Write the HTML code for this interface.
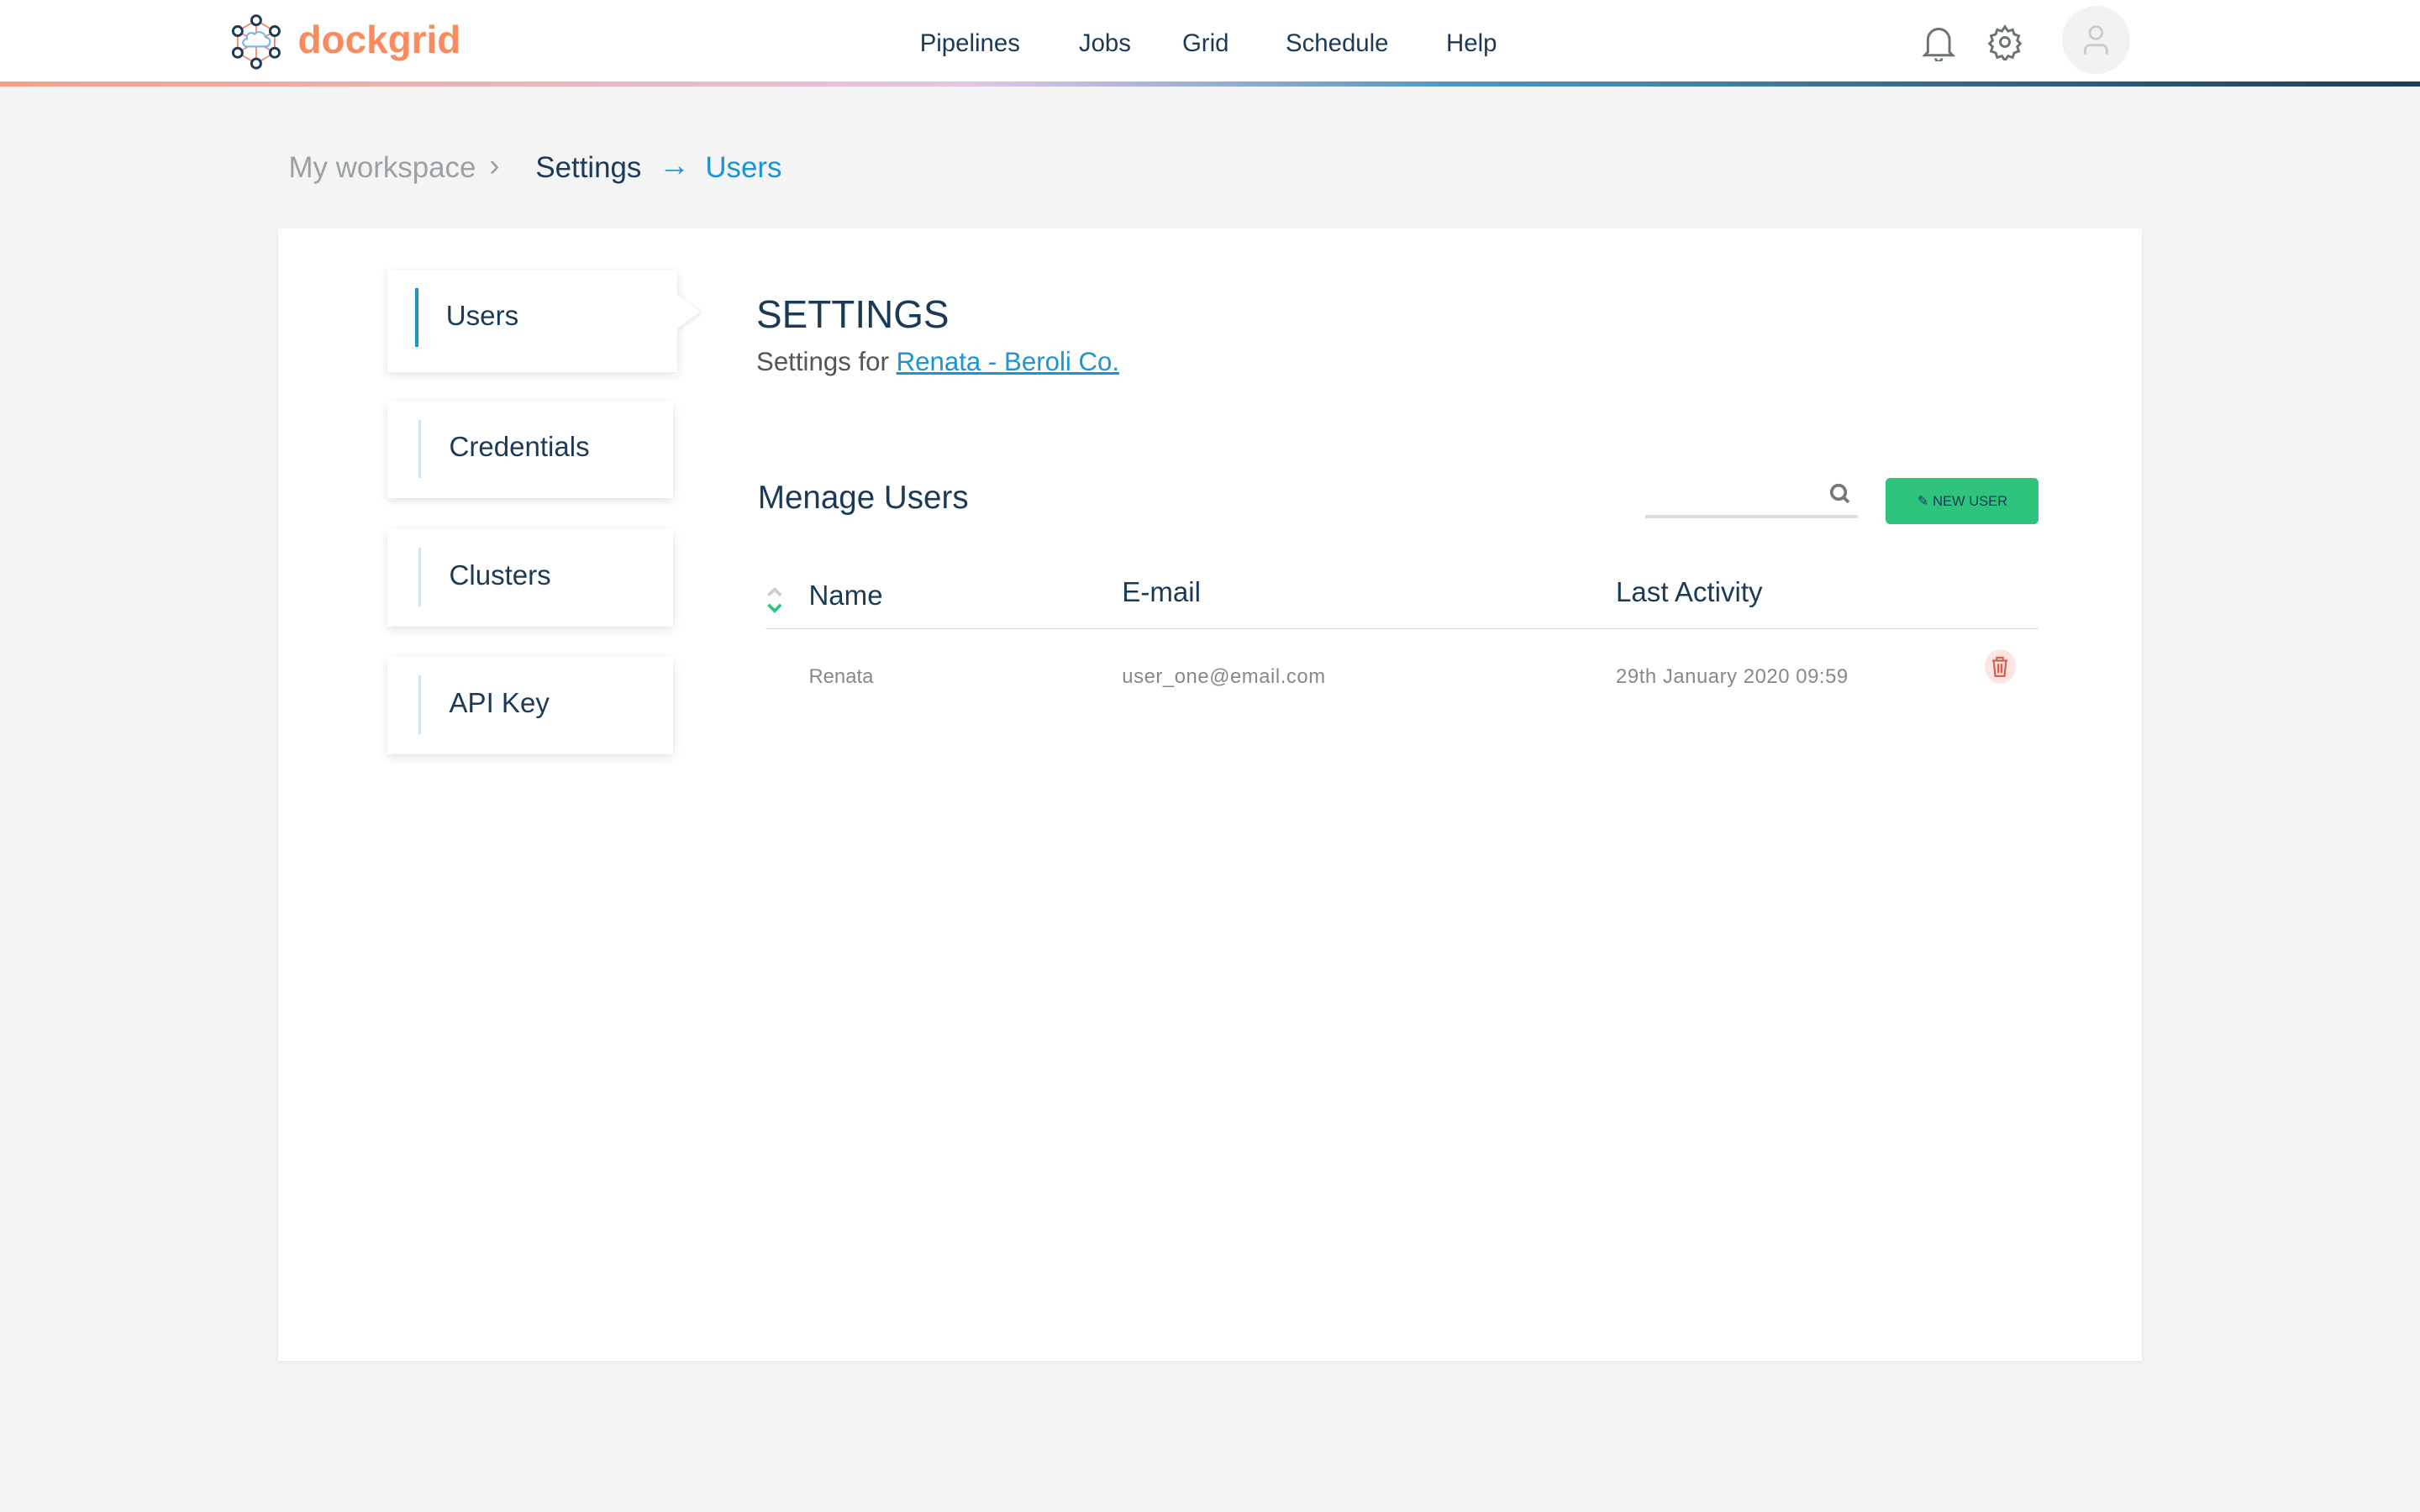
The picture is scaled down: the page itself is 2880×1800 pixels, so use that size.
<!DOCTYPE html>
<html><head><meta charset="utf-8"><style>
html{zoom:1.836735}
body{margin:0;width:1568px;height:980px;background:#f4f4f4;font-family:"Liberation Sans",sans-serif;position:relative;overflow:hidden;color:#1b3a57}
.hdr{position:absolute;left:0;top:0;width:1568px;height:53px;background:#fff}
.bar{position:absolute;left:0;top:53px;width:1568px;height:3px;background:linear-gradient(90deg,#f5a08a 0%,#e3c6e4 40%,#4f97c6 60%,#1c3d57 100%)}
.a{position:absolute;white-space:nowrap}
.nav{top:19px;font-size:16px;color:#1b3a57}
.card{position:absolute;left:180px;top:148px;width:1208px;height:734px;background:#fff;box-shadow:0 1px 3px rgba(0,0,0,.05)}
.tab{position:absolute;background:#fff;box-shadow:0 2px 6px rgba(0,0,0,.12);width:185px;height:63px}
.tab i{position:absolute;left:20px;top:12px;width:2px;height:38px;background:#cfe3f1}
.tab span{position:absolute;left:40px;top:20px;font-size:18px;color:#1b3a57}
</style></head><body>
<div class="hdr"></div><div class="bar"></div>
<svg class="a" style="left:147px;top:8px" width="38" height="38" viewBox="0 0 38 38">
<g stroke="#f48a66" stroke-width="1" fill="none"><path d="M19 5L31 12V26L19 33L7 26V12Z"/><path d="M19 5V33M7 12L31 26M31 12L7 26"/></g>
<g fill="#fff" stroke="#1b3a57" stroke-width="1.6"><circle cx="19" cy="5" r="3"/><circle cx="31" cy="12" r="3"/><circle cx="31" cy="26" r="3"/><circle cx="19" cy="33" r="3"/><circle cx="7" cy="26" r="3"/><circle cx="7" cy="12" r="3"/></g>
<path d="M13 22h12a3 3 0 0 0 0-6 4 4 0 0 0-7-2 3 3 0 0 0-5 3 2.5 2.5 0 0 0 0 5z" fill="#fff" stroke="#7fb6e3" stroke-width="1.2"/></svg>
<div class="a" style="left:193px;top:11px;font-size:25px;font-weight:bold;color:#f98b5f">dockgrid</div>
<div class="a nav" style="left:596px">Pipelines</div>
<div class="a nav" style="left:699px">Jobs</div>
<div class="a nav" style="left:766px">Grid</div>
<div class="a nav" style="left:833px">Schedule</div>
<div class="a nav" style="left:937px">Help</div>
<svg class="a" style="left:1245px;top:16px" width="22" height="24" viewBox="0 0 22 24" fill="none" stroke="#6b7374" stroke-width="1.6"><path d="M4 18V10a7 7 0 0 1 14 0v8l2 2H2z"/><path d="M9 22a2 2 0 0 0 4 0"/></svg>
<svg class="a" style="left:1287px;top:15px" width="24" height="24" viewBox="0 0 24 24" fill="none" stroke="#6b7374" stroke-width="1.6"><circle cx="12" cy="12" r="3"/><path d="M12 2l2 3 3-1 1 3 3 1-1 3 2 2-2 2 1 3-3 1-1 3-3-1-2 3-2-3-3 1-1-3-3-1 1-3-2-2 2-2-1-3 3-1 1-3 3 1z"/></svg>
<div class="a" style="left:1336px;top:4px;width:44px;height:44px;border-radius:50%;background:#f2f2f2"></div>
<svg class="a" style="left:1348px;top:15px" width="20" height="22" viewBox="0 0 20 22" fill="none" stroke="#c7cbcc" stroke-width="1.5"><circle cx="10" cy="6" r="4"/><path d="M3 20v-3a3 3 0 0 1 3-3h8a3 3 0 0 1 3 3v3"/></svg>
<div class="a" style="left:187px;top:98px;font-size:19px;color:#9aa0a4">My workspace</div>
<div class="a" style="left:317px;top:96px;font-size:20px;color:#9aa0a4">›</div>
<div class="a" style="left:347px;top:98px;font-size:19px;color:#1b3a57">Settings</div>
<div class="a" style="left:427px;top:96px;font-size:20px;color:#1c94d2">→</div>
<div class="a" style="left:457px;top:98px;font-size:19px;color:#1c94d2">Users</div>
<div class="card"></div>
<div class="tab" style="left:251px;top:175px;width:188px;height:66px"><i style="background:#1c94d2;top:12px;left:18px"></i><span style="left:38px">Users</span></div>
<div class="a" style="left:438px;top:190px;width:0;height:0;border-top:12px solid transparent;border-bottom:12px solid transparent;border-left:16px solid #fff;filter:drop-shadow(2px 1px 1px rgba(0,0,0,.08))"></div>
<div class="tab" style="left:251px;top:260px"><i></i><span>Credentials</span></div>
<div class="tab" style="left:251px;top:343px"><i></i><span>Clusters</span></div>
<div class="tab" style="left:251px;top:426px"><i></i><span>API Key</span></div>
<div class="a" style="left:490px;top:189px;font-size:25px;color:#1b3a57">SETTINGS</div>
<div class="a" style="left:490px;top:225px;font-size:17px;color:#555">Settings for <span style="color:#1c94d2;text-decoration:underline">Renata - Beroli Co.</span></div>
<div class="a" style="left:491px;top:311px;font-size:21px;color:#1b3a57">Menage Users</div>
<div class="a" style="left:1066px;top:334px;width:138px;height:2px;background:#ddd"></div>
<svg class="a" style="left:1185px;top:313px" width="14" height="14" viewBox="0 0 14 14" fill="none" stroke="#777" stroke-width="2"><circle cx="6" cy="6" r="4.5"/><path d="M9.5 9.5l3 3"/></svg>
<div class="a" style="left:1222px;top:310px;width:99px;height:30px;background:#2ec47d;border-radius:3px;font-size:9px;color:#1b3a57;line-height:30px;text-align:center">✎ NEW USER</div>
<svg class="a" style="left:495px;top:379px" width="14" height="20" viewBox="0 0 14 20" fill="none" stroke-width="2"><path d="M3 7l4-4 4 4" stroke="#ccc"/><path d="M3 13l4 4 4-4" stroke="#2ec47d"/></svg>
<div class="a" style="left:524px;top:376px;font-size:18px">Name</div>
<div class="a" style="left:727px;top:374px;font-size:18px">E-mail</div>
<div class="a" style="left:1047px;top:374px;font-size:18px">Last Activity</div>
<div class="a" style="left:496px;top:407px;width:825px;height:1px;background:#ddd"></div>
<div class="a" style="left:524px;top:431px;font-size:13px;color:#888">Renata</div>
<div class="a" style="left:727px;top:431px;font-size:13px;color:#888;letter-spacing:.3px">user_one@email.com</div>
<div class="a" style="left:1047px;top:431px;font-size:13px;color:#888;letter-spacing:.3px">29th January 2020 09:59</div>
<div class="a" style="left:1286px;top:421px;width:20px;height:22px;border-radius:50%;background:#fbe6e4"></div>
<svg class="a" style="left:1290px;top:425px" width="12" height="14" viewBox="0 0 12 14" fill="none" stroke="#e05a4c" stroke-width="1.2"><path d="M1 3h10M4 3V1h4v2M2 3l1 10h6l1-10M5 5v6M7 5v6"/></svg>
</body></html>
